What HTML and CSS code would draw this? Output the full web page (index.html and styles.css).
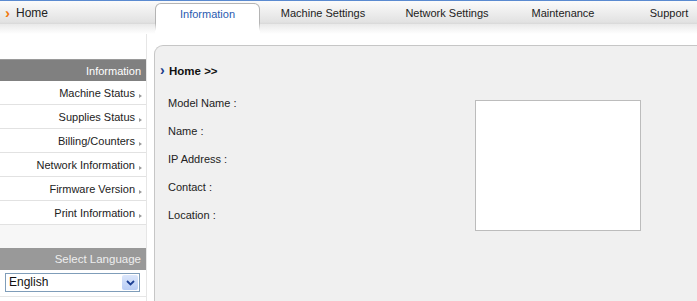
FILE: index.html
```html
<!DOCTYPE html>
<html>
<head>
<meta charset="utf-8">
<link rel="stylesheet" href="styles.css">
</head>
<body>
<div class="page">
  <header class="topbar">
    <a class="home"><span class="home-arrow">&#8250;</span>Home</a>
    <nav class="tabs">
      <a class="tab active">Information</a>
      <a class="tab t2">Machine Settings</a>
      <a class="tab t3">Network Settings</a>
      <a class="tab t4">Maintenance</a>
      <a class="tab t5">Support</a>
    </nav>
  </header>
  <div class="body">
    <aside class="sidebar">
      <div class="side-head">Information</div>
      <ul class="menu">
        <li>Machine Status<span class="tri"></span></li>
        <li>Supplies Status<span class="tri"></span></li>
        <li>Billing/Counters<span class="tri"></span></li>
        <li>Network Information<span class="tri"></span></li>
        <li>Firmware Version<span class="tri"></span></li>
        <li>Print Information<span class="tri"></span></li>
      </ul>
      <div class="spacer"></div>
      <div class="lang-head">Select Language</div>
      <div class="lang-row">
        <div class="select">
          <span class="sel-text">English</span>
          <span class="sel-btn"><svg width="9" height="6" viewBox="0 0 9 6"><path d="M1 1 L4.5 4.5 L8 1" fill="none" stroke="#1c3f94" stroke-width="1.8"/></svg></span>
        </div>
      </div>
    </aside>
    <main class="panel">
      <div class="crumb"><span class="crumb-arrow">&#8250;</span>Home &gt;&gt;</div>
      <div class="content">
        <dl class="info">
          <dt>Model Name :</dt>
          <dt>Name :</dt>
          <dt>IP Address :</dt>
          <dt>Contact :</dt>
          <dt>Location :</dt>
        </dl>
        <div class="picture"></div>
      </div>
    </main>
  </div>
</div>
</body>
</html>
```
FILE: styles.css
```css
* { box-sizing: border-box; }
html, body { margin: 0; padding: 0; background: #fff; }
body {
  font-family: "Liberation Sans", Arial, sans-serif;
  font-size: 11px;
  color: #222;
  width: 697px;
  height: 301px;
  overflow: hidden;
}
.page { width: 697px; overflow: hidden; }

.topbar {
  display: flex;
  height: 34px;
  background: linear-gradient(to bottom,
    #5a8ad0 0, #5a8ad0 1px,
    #fbfbfb 1px, #e2e2e2 22px, #d8d8d8 24px,
    #e9e9e9 24px, #ffffff 34px);
}
.home {
  width: 155px;
  flex-shrink: 0;
  display: flex;
  align-items: flex-start;
  padding: 6px 0 0 5px;
  font-size: 12px;
  color: #222;
  line-height: 14px;
}
.home-arrow {
  color: #f07a10;
  font-weight: bold;
  font-size: 15px;
  line-height: 13px;
  width: 11px;
}
.tabs { display: flex; align-items: flex-start; flex-shrink: 0; }
.tab {
  display: block;
  flex-shrink: 0;
  text-align: center;
  line-height: 14px;
  padding-top: 6px;
  height: 24px;
  color: #222;
  white-space: nowrap;
}
.tab.active {
  width: 105px;
  margin-top: 3px;
  height: 31px;
  padding-top: 3px;
  color: #2a5bb0;
  border: 1px solid transparent;
  border-bottom: 0;
  border-radius: 6px 6px 0 0;
  background:
    linear-gradient(#fff, #fff) padding-box,
    linear-gradient(to bottom, #b4b4b4 0, #b4b4b4 65%, #ffffff 90%) border-box;
}
.t2 { width: 126px; }
.t3 { width: 122px; }
.t4 { width: 110px; }
.t5 { width: 102px; }

.body { display: flex; align-items: flex-start; }

.sidebar {
  width: 147px;
  flex-shrink: 0;
  padding-top: 25px;
  border-right: 1px solid #e6e6e6;
  height: 267px;
  display: flex;
  flex-direction: column;
}
.side-head {
  height: 22px;
  background: #808080;
  border-top: 1px solid #9a9a9a;
  color: #fff;
  text-align: right;
  padding: 4px 5px 0 0;
  line-height: 14px;
}
.menu { list-style: none; margin: 0; padding: 0; }
.menu li {
  height: 24px;
  border-bottom: 1px solid #e2e2e2;
  text-align: right;
  padding: 5px 4px 0 0;
  line-height: 14px;
  background: #fff;
}
.tri {
  display: inline-block;
  width: 0; height: 0;
  border-left: 3px solid #9a9a9a;
  border-top: 2.5px solid transparent;
  border-bottom: 2.5px solid transparent;
  margin-left: 4px;
  vertical-align: -1px;
}
.spacer { height: 23px; background: #f7f7f7; }
.lang-head {
  height: 22px;
  background: #999999;
  color: #eeeeee;
  font-size: 11.5px;
  text-align: right;
  padding: 4px 5px 0 0;
  line-height: 14px;
}
.lang-row {
  padding: 3px 6px 4px 5px;
  border-bottom: 1px solid #e6e6e6;
}
.select {
  display: flex;
  height: 19px;
  border: 1px solid #7f9db9;
  background: #fff;
}
.sel-text {
  flex: 1;
  font-size: 12px;
  line-height: 17px;
  padding-left: 3px;
  color: #111;
}
.sel-btn {
  width: 16px;
  margin: 1px;
  background: linear-gradient(#dbe6fb, #b9cdf5);
  border-radius: 2px;
  display: flex;
  align-items: center;
  justify-content: center;
}

.panel {
  margin-left: 7px;
  margin-top: 11px;
  flex: 1;
  height: 260px;
  background: #f0f0f0;
  border-top: 1px solid #c6c6c6;
  border-left: 1px solid #c6c6c6;
  border-top-left-radius: 9px;
  padding: 17px 0 0 5px;
}
.crumb {
  font-weight: bold;
  font-size: 11.5px;
  line-height: 14px;
  color: #111;
}
.crumb-arrow {
  color: #1a3a8a;
  font-size: 14px;
  display: inline-block;
  width: 9px;
}
.content {
  display: flex;
  align-items: flex-start;
}
.info {
  margin: 18px 0 0 8px;
  width: 307px;
}
.info dt {
  height: 28px;
  line-height: 14px;
  color: #222;
}
.picture {
  margin-top: 22px;
  width: 166px;
  height: 131px;
  background: #fff;
  border: 1px solid #bcbcbc;
}
```
